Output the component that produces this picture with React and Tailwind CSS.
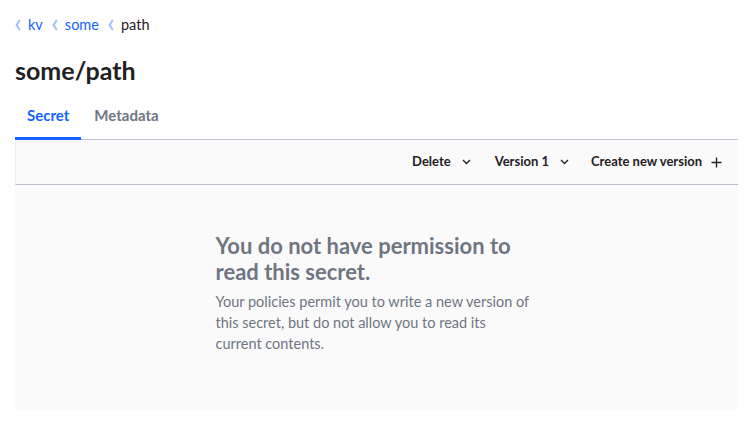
import React from "react";

const Chevron = () => (
  <svg width="6" height="12" viewBox="0 0 6 12" className="mr-[7px]">
    <path d="M4.8 1 L1.6 6 L4.8 11" fill="none" stroke="#a3c1fb" strokeWidth="2" />
  </svg>
);

const Caret = () => (
  <svg width="9" height="6" viewBox="0 0 9 6" className="ml-[11px]">
    <path d="M1 1 L4.5 4.5 L8 1" fill="none" stroke="#1f2124" strokeWidth="1.3" />
  </svg>
);

const App = () => {
  return (
    <div
      className="w-[753px] h-[426px] bg-white px-[15px] text-[#1f2124]"
      style={{ fontFamily: "Lato, sans-serif" }}
    >
      <nav className="flex items-center pt-[14px] h-[22px] box-content text-[14.5px]">
        <a className="flex items-center text-[#1563ff] mr-[9px]">
          <Chevron />
          kv
        </a>
        <a className="flex items-center text-[#1563ff] mr-[9px]">
          <Chevron />
          some
        </a>
        <span className="flex items-center">
          <Chevron />
          path
        </span>
      </nav>
      <h1 className="mt-[20px] text-[25px] font-bold leading-[28px]">some/path</h1>
      <div className="mt-[14px] flex border-b border-[#bac1cc] text-[15px] leading-[18px] font-bold">
        <div className="px-[12px] pb-[13px] pt-[8px] text-[#1563ff] border-b-[3px] border-[#1563ff] -mb-[1px]">
          Secret
        </div>
        <div className="px-[13px] pb-[13px] pt-[8px] text-[#6f7682]">Metadata</div>
      </div>
      <div className="h-[45px] bg-[#fafafa] border-l border-[#ebeef2] border-b border-b-[#bac1cc] flex items-center justify-end pr-[16px] text-[13px] font-bold">
        <button className="flex items-center">
          Delete
          <Caret />
        </button>
        <button className="flex items-center ml-[24px]">
          Version 1
          <Caret />
        </button>
        <button className="flex items-center ml-[22px]">
          Create new version
          <svg width="11" height="11" viewBox="0 0 11 11" className="ml-[9px]">
            <path d="M5.5 0.5 V10.5 M0.5 5.5 H10.5" stroke="#1f2124" strokeWidth="1.4" />
          </svg>
        </button>
      </div>
      <div className="h-[225px] bg-[#fafafa] pt-[48px]">
        <div className="w-[322px] mx-auto">
          <div className="w-[316px]">
            <h2 className="text-[22px] font-bold leading-[26px] text-[#6f7682]">
              You do not have permission to read this secret.
            </h2>
            <p className="mt-[6px] text-[14.5px] leading-[21px] text-[#6f7682]">
              Your policies permit you to write a new version of this secret, but do not allow you to read its current contents.
            </p>
          </div>
        </div>
      </div>
    </div>
  );
};

export default App;
